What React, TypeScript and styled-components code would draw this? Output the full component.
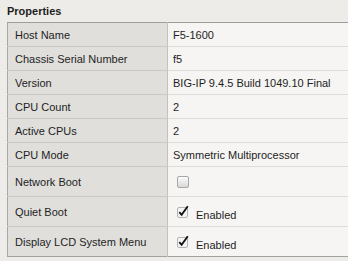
import React from "react";
import styled, { createGlobalStyle } from "styled-components";

const Global = createGlobalStyle`
  html, body { margin: 0; padding: 0; background: #edece8; }
  body { font-family: "Liberation Sans", Arial, sans-serif; font-size: 11px; color: #1e1e1e; }
`;

const Page = styled.div`
  width: 348px;
  height: 261px;
  overflow: hidden;
  padding: 4px 0 0 7px;
  box-sizing: border-box;
`;

const Title = styled.div`
  font-weight: bold;
  font-size: 11px;
  height: 18px;
  line-height: 15px;
`;

const Table = styled.table`
  border-collapse: collapse;
  width: 341px;
  table-layout: fixed;
  border-top: 1px solid #9d9d9b;
  border-left: 1px solid #a9a8a4;
  border-bottom: 1px solid #a3a2a0;
`;

const Row = styled.tr<{ $tall?: boolean }>`
  height: ${(p) => (p.$tall ? 30 : 24)}px;
  &:not(:last-child) td { border-bottom: 1px solid var(--sep); }
`;

const Label = styled.td`
  --sep: #c9c8c4;
  width: 160px;
  background: #e0dfdb;
  border-right: 1px solid #c3c2be;
  padding: 0 0 0 7px;
  box-sizing: border-box;
  vertical-align: middle;
  white-space: nowrap;
`;

const Value = styled.td`
  --sep: #dddcd8;
  background: #f6f5f3;
  padding: 0 0 0 5px;
  vertical-align: middle;
  white-space: nowrap;
`;

const CheckWrap = styled.span`
  display: inline-flex;
  align-items: center;
  gap: 6px;
  margin-left: 4px;
  padding-top: 2px;
`;

const CheckText = styled.span`
  padding-top: 4px;
`;

const Box = styled.span`
  display: inline-block;
  width: 10px;
  height: 10px;
  border: 1px solid #a8a8a8;
  border-radius: 2px;
  background: linear-gradient(#fbfbfb, #d8d8d8);
`;

const Checked = () => (
  <svg width="13" height="13" viewBox="0 0 13 13" style={{ display: "block", marginTop: -3 }}>
    <rect x="0.5" y="2.5" width="10" height="10" rx="1.5" fill="#f4f4f4" stroke="#b4b4b4" />
    <path d="M2.3 7.2 L4.6 9.8 L10.8 1.2" fill="none" stroke="#111" strokeWidth="1.8" strokeLinejoin="miter" />
  </svg>
);

const rows: { label: string; value?: string; kind?: "off" | "on" }[] = [
  { label: "Host Name", value: "F5-1600" },
  { label: "Chassis Serial Number", value: "f5" },
  { label: "Version", value: "BIG-IP 9.4.5 Build 1049.10 Final" },
  { label: "CPU Count", value: "2" },
  { label: "Active CPUs", value: "2" },
  { label: "CPU Mode", value: "Symmetric Multiprocessor" },
  { label: "Network Boot", kind: "off" },
  { label: "Quiet Boot", kind: "on" },
  { label: "Display LCD System Menu", kind: "on" },
];

export default function App() {
  return (
    <>
      <Global />
      <Page>
        <Title>Properties</Title>
        <Table>
          <tbody>
            {rows.map((r) => (
              <Row key={r.label} $tall={!!r.kind}>
                <Label>{r.label}</Label>
                <Value>
                  {r.kind === "off" && (
                    <CheckWrap>
                      <Box />
                    </CheckWrap>
                  )}
                  {r.kind === "on" && (
                    <CheckWrap>
                      <Checked />
                      <CheckText>Enabled</CheckText>
                    </CheckWrap>
                  )}
                  {!r.kind && r.value}
                </Value>
              </Row>
            ))}
          </tbody>
        </Table>
      </Page>
    </>
  );
}
